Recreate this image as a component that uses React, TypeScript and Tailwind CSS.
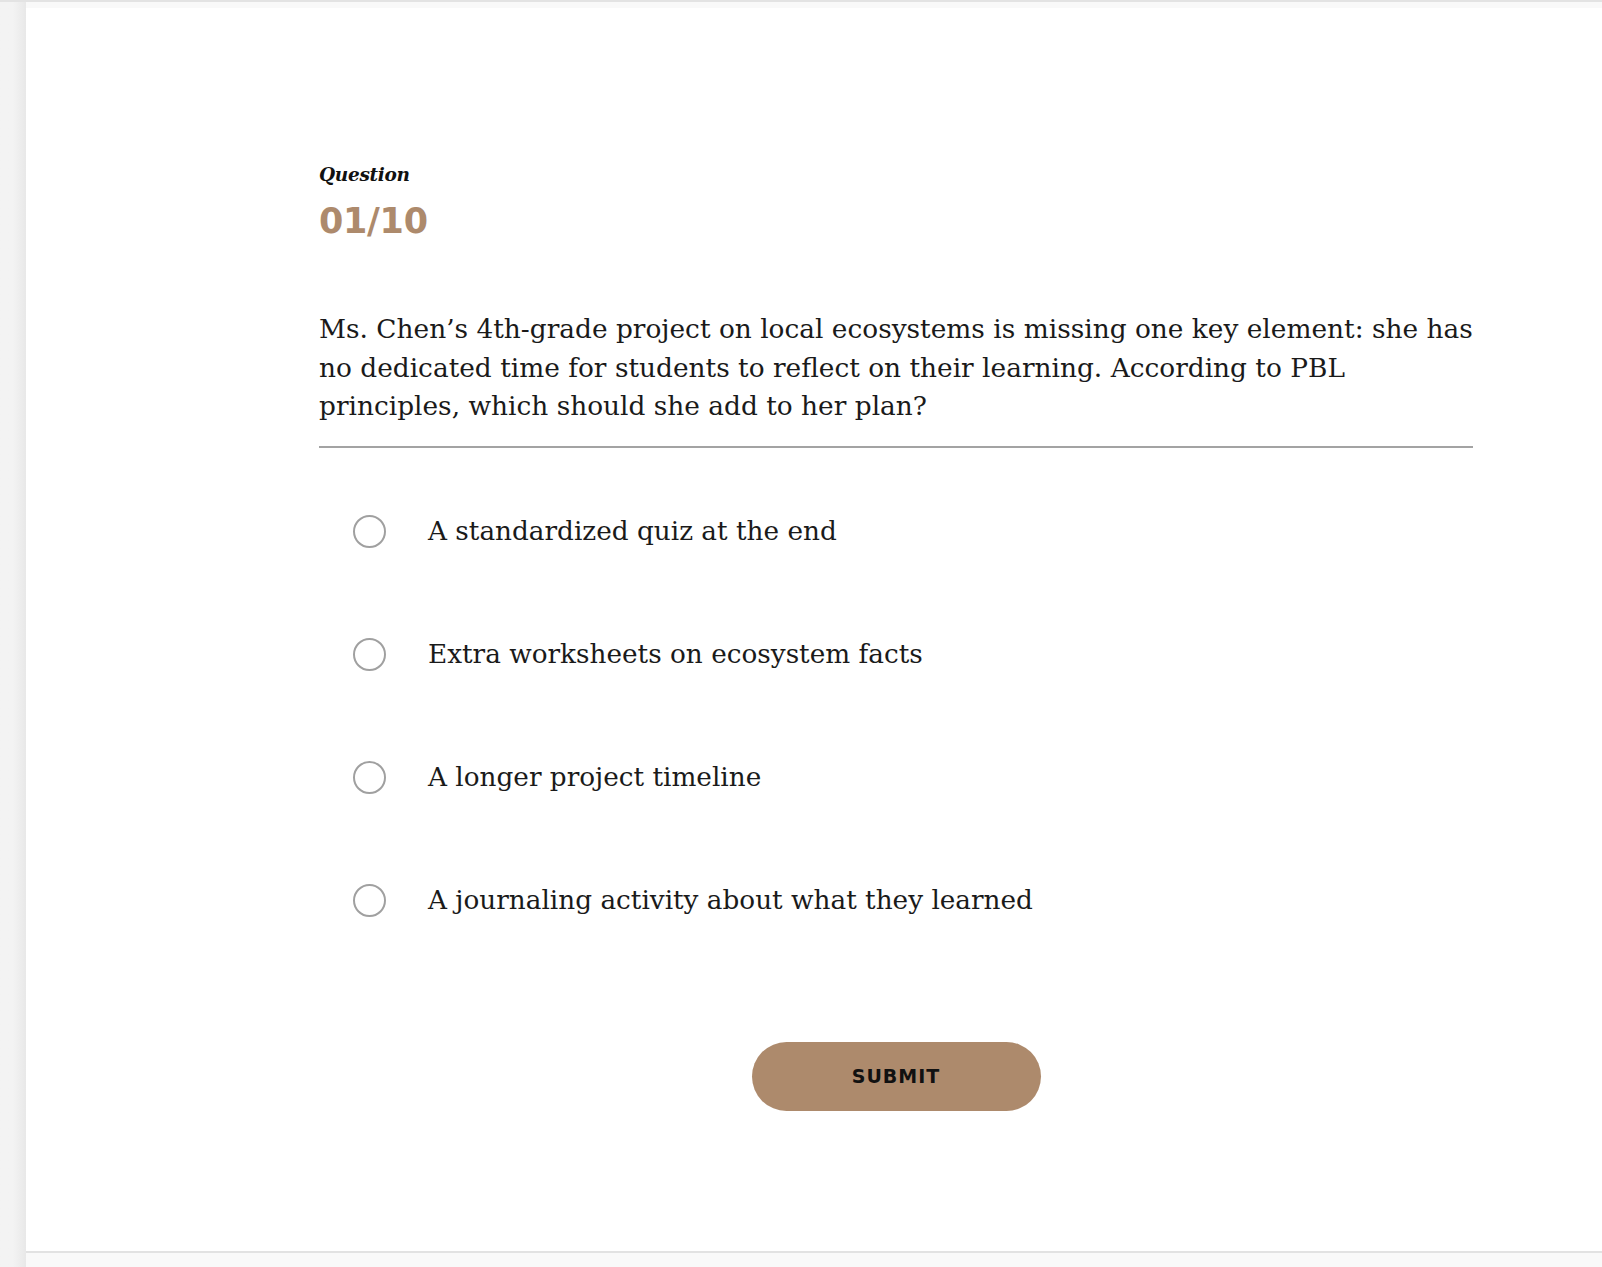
import React from "react";

const options = [
  "A standardized quiz at the end",
  "Extra worksheets on ecosystem facts",
  "A longer project timeline",
  "A journaling activity about what they learned",
];

export default function App() {
  return (
    <div className="w-full h-[1267px] bg-[#f9f9f9] border-t-2 border-[#e3e3e3] flex overflow-hidden">
      <div className="w-[26px] h-full bg-gradient-to-r from-[#f3f3f3] via-[#f3f3f3] to-[#e8e8e8] shrink-0" />
      <div className="flex-1 pt-[6px]">
        <div className="h-[1245px] bg-white border-b-2 border-[#e2e2e2]">
          <div className="pl-[293px] pt-[155px]">
            <div className="w-[1154px] flex flex-col">
              <div
                className="text-[18.5px] leading-[24px] italic font-bold tracking-[-0.3px] text-[#111]"
                style={{ fontFamily: '"DejaVu Serif", serif' }}
              >
                Question
              </div>
              <div
                className="mt-[17px] text-[35px] leading-[34px] font-bold tracking-[-0.3px] text-[#ad8a6c]"
                style={{ fontFamily: '"DejaVu Sans", sans-serif' }}
              >
                01/10
              </div>
              <p
                className="mt-[72px] text-[26.4px] leading-[38.5px] text-[#1a1a1a]"
                style={{ fontFamily: '"DejaVu Serif", serif' }}
              >
                Ms. Chen’s 4th-grade project on local ecosystems is missing one key element: she has
                no dedicated time for students to reflect on their learning. According to PBL
                principles, which should she add to her plan?
              </p>
              <div className="mt-[20px] h-[2px] bg-[#a3a3a3]" />
              <div className="mt-[22px] flex flex-col">
                {options.map((o) => (
                  <label key={o} className="h-[123px] flex items-center cursor-pointer">
                    <span className="ml-[34px] w-[33px] h-[33px] rounded-full border-2 border-[#a0a0a0] shrink-0" />
                    <span
                      className="ml-[42px] text-[26.3px] leading-[32px] text-[#1a1a1a]"
                      style={{ fontFamily: '"DejaVu Serif", serif' }}
                    >
                      {o}
                    </span>
                  </label>
                ))}
              </div>
              <button
                className="mt-[80px] mx-auto w-[289px] h-[69px] rounded-full bg-[#ad8a6c] text-[19px] font-bold tracking-[1px] text-[#111] flex items-center justify-center"
                style={{ fontFamily: '"DejaVu Sans", sans-serif' }}
              >
                SUBMIT
              </button>
            </div>
          </div>
        </div>
      </div>
    </div>
  );
}
